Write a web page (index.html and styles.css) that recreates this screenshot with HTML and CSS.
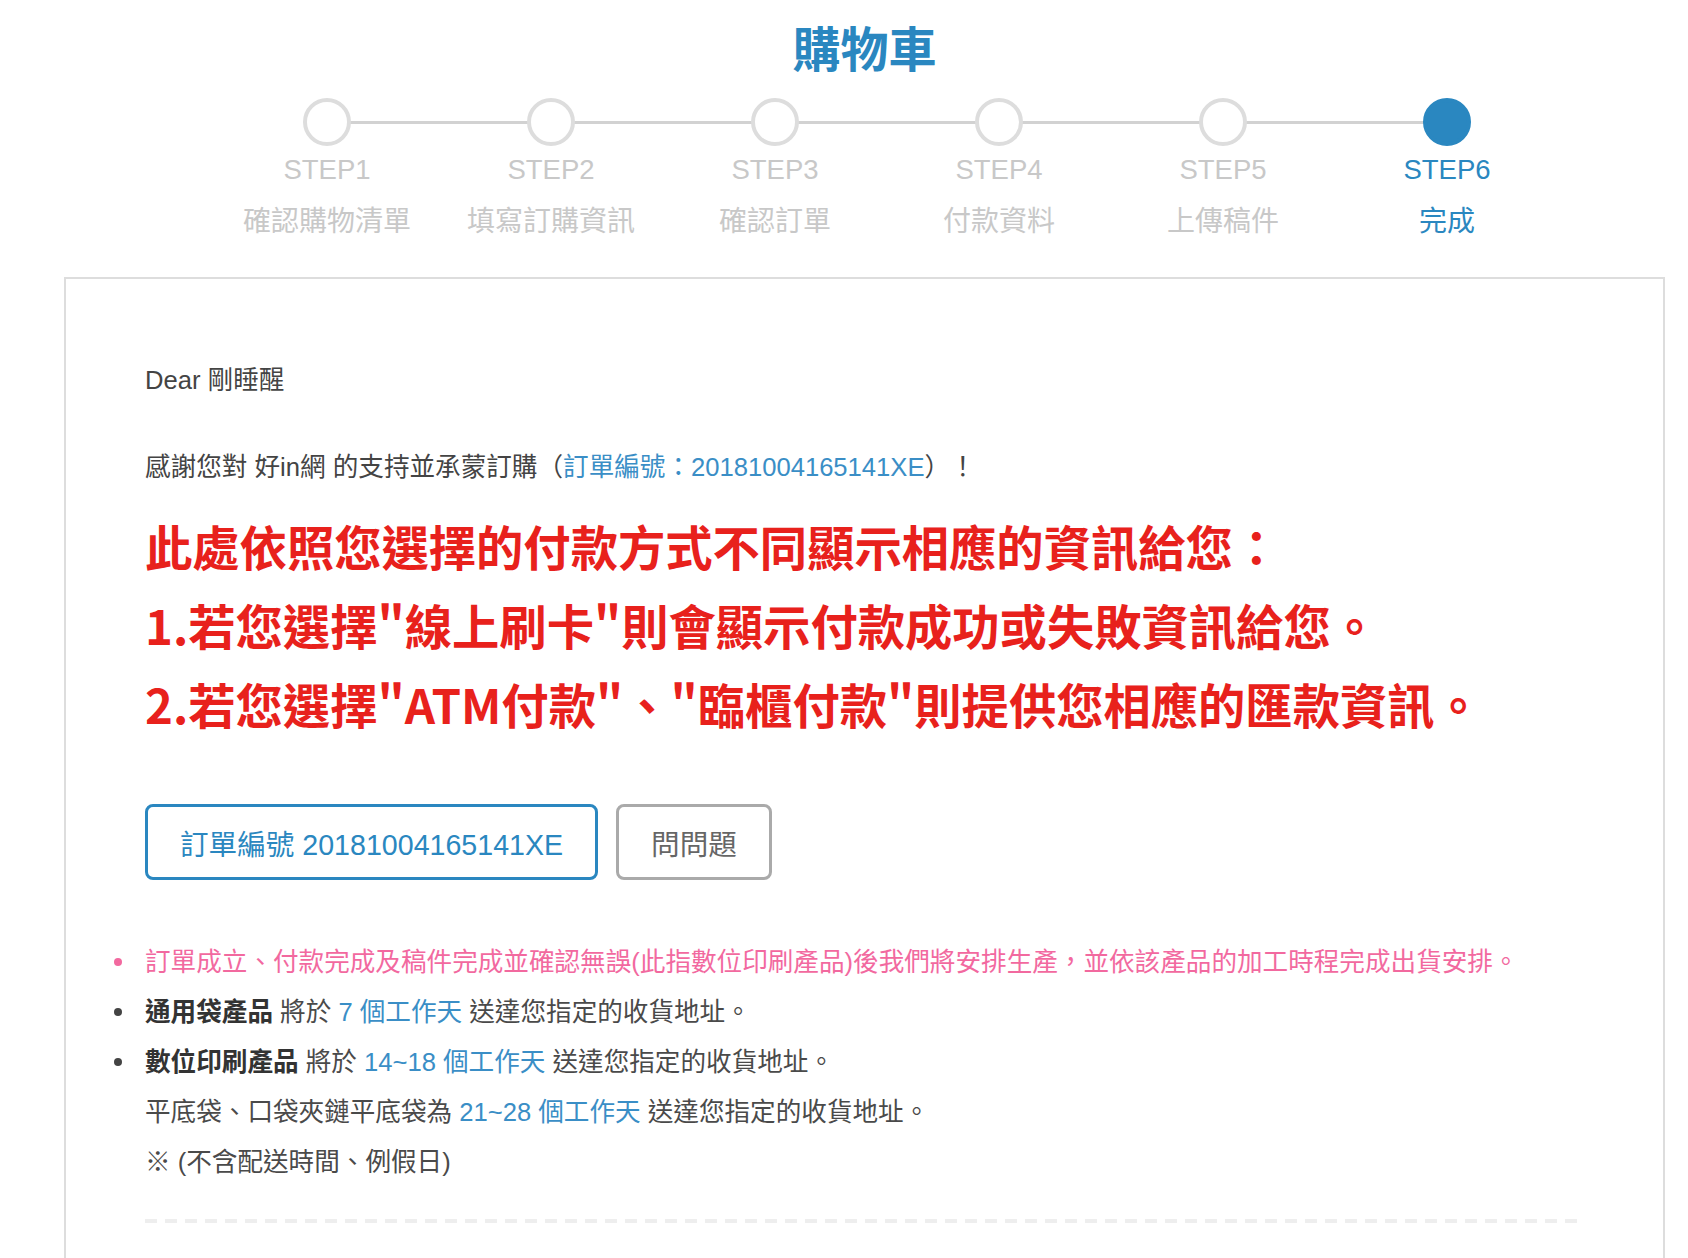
FILE: index.html
```html
<!DOCTYPE html>
<html lang="zh-Hant">
<head>
<meta charset="utf-8">
<title>購物車</title>
<link rel="stylesheet" href="styles.css">
</head>
<body>
<header class="page-head">
  <h1 class="title">購物車</h1>
</header>
<ol class="steps">
  <li class="step"><span class="dot"></span><span class="step-no">STEP1</span><span class="step-name">確認購物清單</span></li>
  <li class="step"><span class="dot"></span><span class="step-no">STEP2</span><span class="step-name">填寫訂購資訊</span></li>
  <li class="step"><span class="dot"></span><span class="step-no">STEP3</span><span class="step-name">確認訂單</span></li>
  <li class="step"><span class="dot"></span><span class="step-no">STEP4</span><span class="step-name">付款資料</span></li>
  <li class="step"><span class="dot"></span><span class="step-no">STEP5</span><span class="step-name">上傳稿件</span></li>
  <li class="step active"><span class="dot"></span><span class="step-no">STEP6</span><span class="step-name">完成</span></li>
</ol>
<section class="panel">
  <p class="dear">Dear 剛睡醒</p>
  <p class="thanks">感謝您對 好in網 的支持並承蒙訂購（<span class="blue">訂單編號：20181004165141XE</span>）！</p>
  <div class="notice">
    <p>此處依照您選擇的付款方式不同顯示相應的資訊給您：</p>
    <p>1.若您選擇"線上刷卡"則會顯示付款成功或失敗資訊給您。</p>
    <p>2.若您選擇"ATM付款"、"臨櫃付款"則提供您相應的匯款資訊。</p>
  </div>
  <div class="actions">
    <a class="btn btn-primary">訂單編號 20181004165141XE</a>
    <a class="btn btn-default">問問題</a>
  </div>
  <ul class="info">
    <li class="pink">訂單成立、付款完成及稿件完成並確認無誤(此指數位印刷產品)後我們將安排生產，並依該產品的加工時程完成出貨安排。</li>
    <li><b>通用袋產品</b> 將於 <span class="blue">7 個工作天</span> 送達您指定的收貨地址。</li>
    <li><b>數位印刷產品</b> 將於 <span class="blue">14~18 個工作天</span> 送達您指定的收貨地址。</li>
    <li class="plain">平底袋、口袋夾鏈平底袋為 <span class="blue">21~28 個工作天</span> 送達您指定的收貨地址。</li>
    <li class="plain">※ (不含配送時間、例假日)</li>
  </ul>
  <div class="divider"></div>
</section>
</body>
</html>
```

FILE: styles.css
```css
* { box-sizing: border-box; }

html, body {
  margin: 0;
  padding: 0;
  background: #ffffff;
}

body {
  font-family: "Liberation Sans", "Noto Sans CJK TC", sans-serif;
  color: #4a4a4a;
}

p { margin: 0; }

.page-head {
  padding-top: 18px;
  padding-left: 64px;
  padding-right: 23px;
  text-align: center;
}

.title {
  margin: 0;
  font-family: "Noto Sans CJK TC", sans-serif;
  font-size: 48px;
  line-height: 56px;
  font-weight: 700;
  color: #2a87c0;
}

.steps {
  list-style: none;
  margin: 24px 0 0 215px;
  padding: 0;
  width: 1344px;
  display: grid;
  grid-template-columns: repeat(6, 1fr);
  position: relative;
}

.steps::before {
  content: "";
  position: absolute;
  left: 112px;
  right: 112px;
  top: 23px;
  height: 3px;
  background: #d2d2d2;
}

.step {
  display: flex;
  flex-direction: column;
  align-items: center;
  position: relative;
  color: #c8c8c8;
}

.dot {
  width: 48px;
  height: 48px;
  border-radius: 50%;
  border: 4px solid #dddddd;
  background: #ffffff;
  position: relative;
  z-index: 1;
}

.step-no {
  margin-top: 8px;
  font-size: 27.5px;
  line-height: 32px;
}

.step-name {
  margin-top: 18px;
  font-size: 28px;
  line-height: 36px;
}

.step.active { color: #2a87c0; }
.step.active .dot {
  background: #2a87c0;
  border-color: #2a87c0;
}

.panel {
  margin: 37px 23px 0 64px;
  border: 2px solid #dddddd;
  border-bottom: none;
  padding: 81px 81px 100px 79px;
  min-height: 1100px;
}

.dear {
  font-size: 25.6px;
  line-height: 40px;
  color: #444444;
}

.thanks {
  margin-top: 47px;
  font-size: 25.6px;
  line-height: 40px;
  color: #444444;
}

.blue { color: #3a8ec6; }

.notice {
  margin-top: 19px;
  font-family: "Noto Sans CJK TC", sans-serif;
  font-weight: 700;
  font-size: 47.3px;
  line-height: 79px;
  color: #e8211c;
}

.actions {
  margin-top: 61px;
  display: flex;
  gap: 18px;
}

.btn {
  display: inline-flex;
  align-items: center;
  height: 76px;
  padding: 0 32px;
  border: 3px solid #2a87c0;
  border-radius: 8px;
  font-size: 28.6px;
  background: #ffffff;
}

.btn-primary {
  color: #2a87c0;
  border-color: #2a87c0;
}

.btn-default {
  color: #666666;
  border-color: #aaaaaa;
}

.info {
  list-style: none;
  margin: 57px 0 0 0;
  padding: 0;
  font-size: 25.6px;
  line-height: 50px;
  color: #4a4a4a;
}

.info li {
  position: relative;
}

.info li::before {
  content: "";
  position: absolute;
  left: -31px;
  top: 21px;
  width: 8px;
  height: 8px;
  border-radius: 50%;
  background: #444444;
}

.info li.plain::before { display: none; }

.info li.pink { color: #f2699f; }
.info li.pink::before { background: #f2699f; }

.info b {
  color: #333333;
  font-weight: 700;
}

.divider {
  margin-top: 32px;
  height: 4px;
  background-image: linear-gradient(to right, #eeeeee 0 12px, transparent 12px 20px);
  background-size: 20px 4px;
  background-repeat: repeat-x;
}
```
